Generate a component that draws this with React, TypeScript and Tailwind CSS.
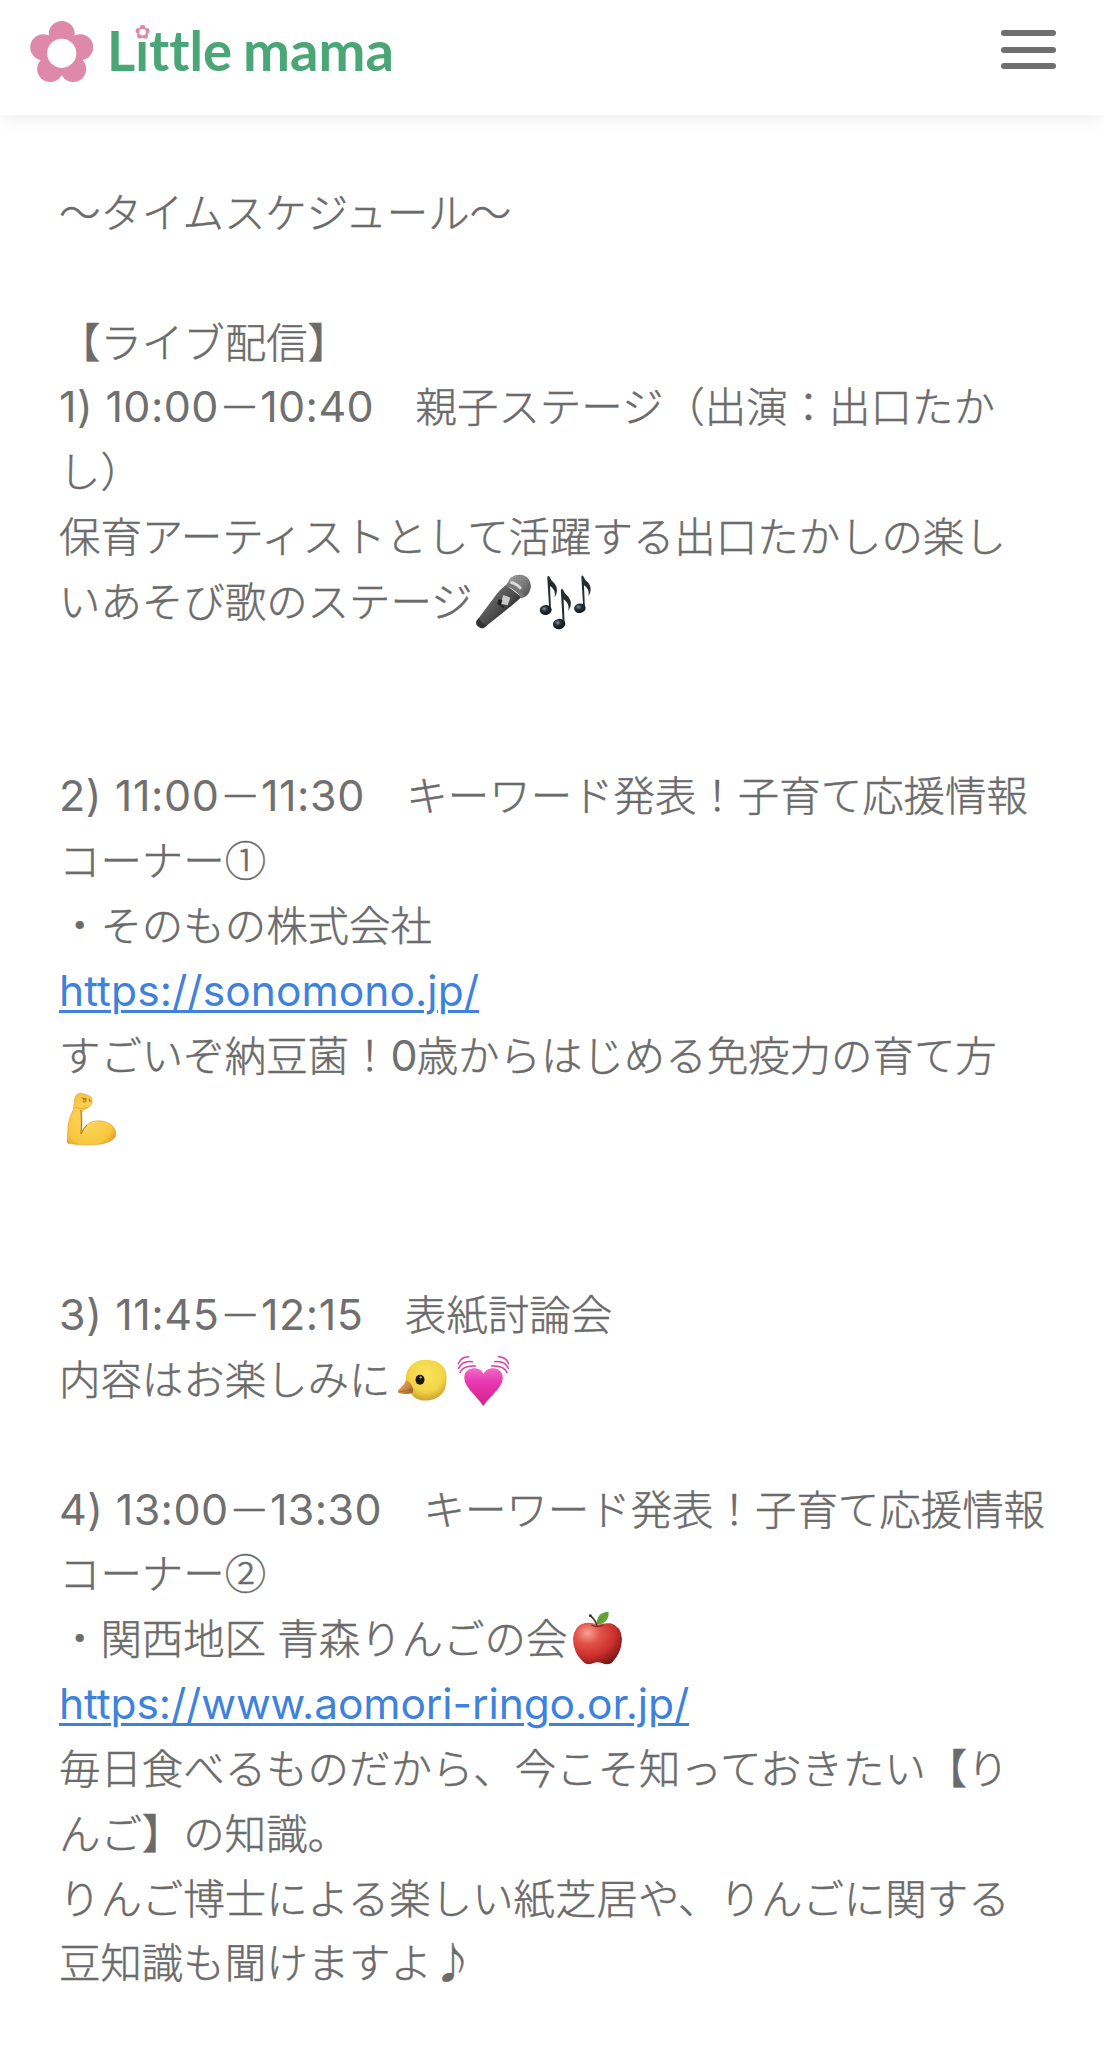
import type { ReactNode } from 'react';

const PETALS = [
    [61.7, 34],
    [80.2, 47.3],
    [73.2, 69],
    [50.2, 69],
    [43.2, 47.3],
];

function Logo() {
    return (
        <svg width="400" height="96" viewBox="0 0 400 96" className="block">
            <g fill="#df89a9">
                {PETALS.map(([cx, cy]) => (
                    <circle key={`${cx}-${cy}`} cx={cx} cy={cy} r="13" />
                ))}
                <circle cx="61.7" cy="53.5" r="19" />
            </g>
            <circle cx="61.7" cy="53.3" r="14.6" fill="#fff" />

            <g className="[font-variant-ligatures:none]" fill="#4ba677" fontFamily="Lato, sans-serif" fontWeight="700" fontSize="56">
                <text x="107" y="71" textLength="125" lengthAdjust="spacingAndGlyphs">Little</text>
                <text x="243" y="71" textLength="151" lengthAdjust="spacingAndGlyphs">mama</text>
            </g>

            {/* small flower in place of the dot on the i */}
            <rect x="135" y="22" width="15" height="18" fill="#fff" />
            <g transform="translate(142.6 32.2) scale(0.222) translate(-61.7 -53.3)">
                <g fill="#df89a9">
                    {PETALS.map(([cx, cy]) => (
                        <circle key={`${cx}-${cy}`} cx={cx} cy={cy} r="13" />
                    ))}
                    <circle cx="61.7" cy="53.5" r="19" />
                </g>
                <circle cx="61.7" cy="53.3" r="14.6" fill="#fff" />
            </g>
        </svg>
    );
}

function Emoji({ viewBox, children }: { viewBox: string; children: ReactNode }) {
    return (
        <svg viewBox={viewBox} className="inline-block w-[61px] h-[60px] align-middle -mt-2">
            {children}
        </svg>
    );
}

function Mic() {
    return (
        <Emoji viewBox="36 36 183 180">
            <defs>
                <linearGradient id="micBody" x1="0" y1="0" x2="1" y2="1">
                    <stop offset="0.3" stopColor="#666" />
                    <stop offset="0.55" stopColor="#4a4a4a" />
                    <stop offset="0.75" stopColor="#1f1f1f" />
                </linearGradient>
                <linearGradient id="micHead" x1="0" y1="0" x2="1" y2="1">
                    <stop offset="0" stopColor="#aaa" />
                    <stop offset="0.5" stopColor="#888" />
                    <stop offset="1" stopColor="#444" />
                </linearGradient>
                <pattern id="mesh" width="5" height="5" patternUnits="userSpaceOnUse">
                    <path d="M0 0H5M0 0V5" stroke="#555" strokeWidth="1.4" />
                </pattern>
            </defs>
            <path d="M135 75 Q118 87 105 105 L47 182 Q42 193 53 200 Q64 208 71 202 L158 132 Q174 118 181 111Z" fill="url(#micBody)" />
            <path d="M47 182 Q42 193 53 200 Q64 208 71 202 L78 196 Q62 192 54 174Z" fill="#333" />
            <path d="M139 74 Q142 54 163 46 Q188 40 203 57 Q216 77 204 98 Q196 111 181 113 Q167 90 139 74Z" fill="url(#micHead)" />
            <path d="M139 74 Q142 54 163 46 Q188 40 203 57 Q216 77 204 98 Q196 111 181 113 Q167 90 139 74Z" fill="url(#mesh)" opacity=".7" />
            <path d="M139 69 Q170 76 189 106 L183 116 Q165 90 135 77Z" fill="#777" />
            <path d="M150 62 Q171 68 183 84 L177 89 Q166 76 147 70Z" fill="#ddd" />
            <path d="M127 105 L148 113 L140 136 L119 131Z" fill="#c9c9c9" />
            <path d="M112 118 L124 120 L120 136 L131 138 L127 144 L109 132Z" fill="#202020" />
        </Emoji>
    );
}

function Notes() {
    return (
        <Emoji viewBox="219 36 183 180">
            <defs>
                <radialGradient id="noteHead" cx=".4" cy=".35" r=".7">
                    <stop offset="0" stopColor="#8796a0" />
                    <stop offset=".35" stopColor="#29343b" />
                    <stop offset="1" stopColor="#0a0d10" />
                </radialGradient>
                <g id="note">
                    <path d="M19 8 Q18 -1 24 1 Q29 14 42 25 Q55 44 41 65 Q45 42 27 31 L30 103 L25 107Z" fill="#252d33" />
                    <ellipse cx="14" cy="103" rx="18" ry="15" fill="url(#noteHead)" transform="rotate(-8 14 103)" />
                </g>
            </defs>
            <use href="#note" transform="translate(240 47)" />
            <use href="#note" transform="translate(280 86) scale(1.03)" />
            <use href="#note" transform="translate(343 46) scale(.96)" />
        </Emoji>
    );
}

function Biceps() {
    return (
        <Emoji viewBox="27 32 183 180">
            <defs>
                <radialGradient id="skin" cx=".45" cy=".5" r=".65">
                    <stop offset="0" stopColor="#ffd95c" />
                    <stop offset=".75" stopColor="#f8c640" />
                    <stop offset="1" stopColor="#dd9d2b" />
                </radialGradient>
            </defs>
            <path
                d="M75 54 Q80 42 92 41 Q99 44 105 45 Q119 48 126 56 Q123 60 127 68 Q122 82 112 87 Q99 90 95 100 Q98 133 94 163 Q105 134 129 126 Q161 119 185 137 Q201 153 197 171 Q187 188 155 194 Q108 200 75 195 L54 192 Q49 190 52 182 L54 137 Q56 118 70 91 Q72 74 75 54Z"
                fill="url(#skin)"
                stroke="#cf962c"
                strokeWidth="1.5"
            />
            <path d="M93 92 Q96 132 93 164 Q101 145 111 137" fill="none" stroke="#ac741e" strokeWidth="3" />
            <path d="M77 83 Q88 91 112 85" fill="none" stroke="#dda638" strokeWidth="3" />
            <path d="M95 56 L108 58 M98 67 L106 68 M108 56 L107 68 M118 58 Q115 68 124 66 M99 61 L105 62" fill="none" stroke="#a96c20" strokeWidth="3" />
        </Emoji>
    );
}

function Chick() {
    return (
        <Emoji viewBox="30 30 183 180">
            <defs>
                <radialGradient id="chick" cx=".5" cy=".35" r=".65">
                    <stop offset="0" stopColor="#fbe45c" />
                    <stop offset=".65" stopColor="#f3d548" />
                    <stop offset="1" stopColor="#cda32f" />
                </radialGradient>
                <linearGradient id="beak" x1="0" y1="0" x2="1" y2="1">
                    <stop offset="0" stopColor="#f2b36a" />
                    <stop offset=".6" stopColor="#c98440" />
                    <stop offset="1" stopColor="#8c5423" />
                </linearGradient>
            </defs>
            <path d="M75 122 Q73 91 92 74 Q113 55 147 60 Q181 64 193 90 Q201 117 192 147 Q180 175 146 181 Q117 185 98 170 Q79 151 75 122Z" fill="url(#chick)" />
            <path d="M75 121 Q88 126 94 140 Q101 152 92 160 Q71 165 52 158 Q48 153 55 147 Q69 137 75 121Z" fill="url(#beak)" />
            <path d="M53 156 Q72 153 90 149" fill="none" stroke="#8d5a2c" strokeWidth="2" />
            <ellipse cx="117" cy="119" rx="13.5" ry="15" fill="#1d160d" />
            <circle cx="119" cy="112" r="3.5" fill="#b3aaa0" />
        </Emoji>
    );
}

function BeatingHeart() {
    return (
        <Emoji viewBox="213 30 183 180">
            <defs>
                <linearGradient id="heart" x1="0" y1="0" x2="0" y2="1">
                    <stop offset="0" stopColor="#ed6cc4" />
                    <stop offset=".35" stopColor="#e83ab2" />
                    <stop offset="1" stopColor="#d51f91" />
                </linearGradient>
            </defs>
            <path d="M308 103 C300 80 260 78 251 104 C243 138 282 160 307 198 C333 160 373 138 364 104 C355 78 316 80 308 103Z" fill="url(#heart)" />
            <g fill="none" stroke="#dc3da6" strokeWidth="4.5" strokeLinecap="round">
                <path d="M237 97 Q247 75 283 78" />
                <path d="M233 85 Q244 61 274 65" />
                <path d="M232 71 Q240 50 263 50" />
                <path d="M378 97 Q368 75 332 78" />
                <path d="M382 85 Q371 61 341 65" />
                <path d="M383 71 Q375 50 352 50" />
            </g>
        </Emoji>
    );
}

function Apple() {
    return (
        <Emoji viewBox="81 418 183 180">
            <defs>
                <radialGradient id="apple" cx=".3" cy=".25" r=".85">
                    <stop offset="0" stopColor="#f5a595" />
                    <stop offset=".3" stopColor="#e2534a" />
                    <stop offset=".65" stopColor="#cb302d" />
                    <stop offset="1" stopColor="#721512" />
                </radialGradient>
            </defs>
            <path d="M172 465 Q190 459 212 461 Q244 470 246 508 Q245 549 216 579 Q202 588 187 581 Q173 574 159 581 Q142 588 131 578 Q99 549 99 507 Q103 467 135 460 Q156 457 172 465Z" fill="url(#apple)" />
            <path d="M154 466 Q172 475 192 466" fill="none" stroke="#9d2520" strokeWidth="4" />
            <path d="M172 468 Q165 449 151 438" fill="none" stroke="#57302a" strokeWidth="4.5" />
            <circle cx="151" cy="438" r="4" fill="#3f2320" />
            <path d="M171 465 Q168 439 188 430 Q197 426 206 427 Q207 452 189 461 Q181 465 171 465Z" fill="#64a438" />
            <path d="M172 463 Q183 444 202 430" fill="none" stroke="#3f7f24" strokeWidth="1.5" />
        </Emoji>
    );
}

function Latin({ tracking = 'tracking-[0.4px]', children }: { tracking?: string; children: ReactNode }) {
    return (
        <span className={`font-['Inter'] font-normal text-[43px] text-[#707070] [-webkit-text-stroke:0] ${tracking}`}>
            {children}
        </span>
    );
}

function Line({ children }: { children?: ReactNode }) {
    return <div className="h-[64.84px] whitespace-pre">{children}</div>;
}

function Link({ href, tracking }: { href: string; tracking: string }) {
    return (
        <a
            href={href}
            className={`font-['Inter'] font-normal text-[42.5px] text-[#3f82dc] underline decoration-[3px] underline-offset-[4px] [-webkit-text-stroke:0] ${tracking}`}
        >
            {href}
        </a>
    );
}

export default function App() {
    return (
        <div lang="ja" className="w-[1104px] h-[2048px] bg-white overflow-hidden">
            <header className="flex items-start justify-between h-[115px] pr-12 bg-white shadow-[0_6px_16px_-2px_rgba(0,0,0,0.07)]">
                <Logo />
                <button className="flex flex-col gap-[10.5px] pt-[30px]" aria-label="menu">
                    <span className="w-[55px] h-[6px] rounded-full bg-[#6f6f6f]" />
                    <span className="w-[55px] h-[6px] rounded-full bg-[#6f6f6f]" />
                    <span className="w-[55px] h-[6px] rounded-full bg-[#6f6f6f]" />
                </button>
            </header>

            <main className="pt-[63px] pl-[59px] font-['Noto_Sans_CJK_JP',sans-serif] font-light text-[41.45px] leading-[64.84px] text-[#6b6b6b] [-webkit-text-stroke:0.45px_#6b6b6b]">
                <Line>〜タイムスケジュール〜</Line>
                <Line />
                <Line>【ライブ配信】</Line>
                <Line><Latin>1) 10:00</Latin>－<Latin>10:40</Latin>　親子ステージ（出演：出口たか</Line>
                <Line>し）</Line>
                <Line>保育アーティストとして活躍する出口たかしの楽し</Line>
                <Line>いあそび歌のステージ<Mic /><Notes /></Line>
                <Line />
                <Line />
                <Line><Latin tracking="tracking-[0.6px]">2) 11:00</Latin>－<Latin tracking="tracking-[0.6px]">11:30</Latin>　キーワード発表！子育て応援情報</Line>
                <Line>コーナー①</Line>
                <Line>・そのもの株式会社</Line>
                <Line><Link href="https://sonomono.jp/" tracking="tracking-[0.06px]" /></Line>
                <Line>すごいぞ納豆菌！<Latin tracking="tracking-[-1px]">0</Latin>歳からはじめる免疫力の育て方</Line>
                <Line><Biceps /></Line>
                <Line />
                <Line />
                <Line><Latin tracking="tracking-[0.6px]">3) 11:45</Latin>－<Latin tracking="tracking-[0.6px]">12:15</Latin>　表紙討論会</Line>
                <Line>内容はお楽しみに<Chick /><BeatingHeart /></Line>
                <Line />
                <Line><Latin>4) 13:00</Latin>－<Latin>13:30</Latin>　キーワード発表！子育て応援情報</Line>
                <Line>コーナー②</Line>
                <Line>・関西地区<Latin tracking="tracking-[-1px]"> </Latin>青森りんごの会<Apple /></Line>
                <Line><Link href="https://www.aomori-ringo.or.jp/" tracking="tracking-[-0.12px]" /></Line>
                <Line>毎日食べるものだから、今こそ知っておきたい【り</Line>
                <Line>んご】の知識。</Line>
                <Line>りんご博士による楽しい紙芝居や、りんごに関する</Line>
                <Line>豆知識も聞けますよ♪</Line>
            </main>
        </div>
    );
}
